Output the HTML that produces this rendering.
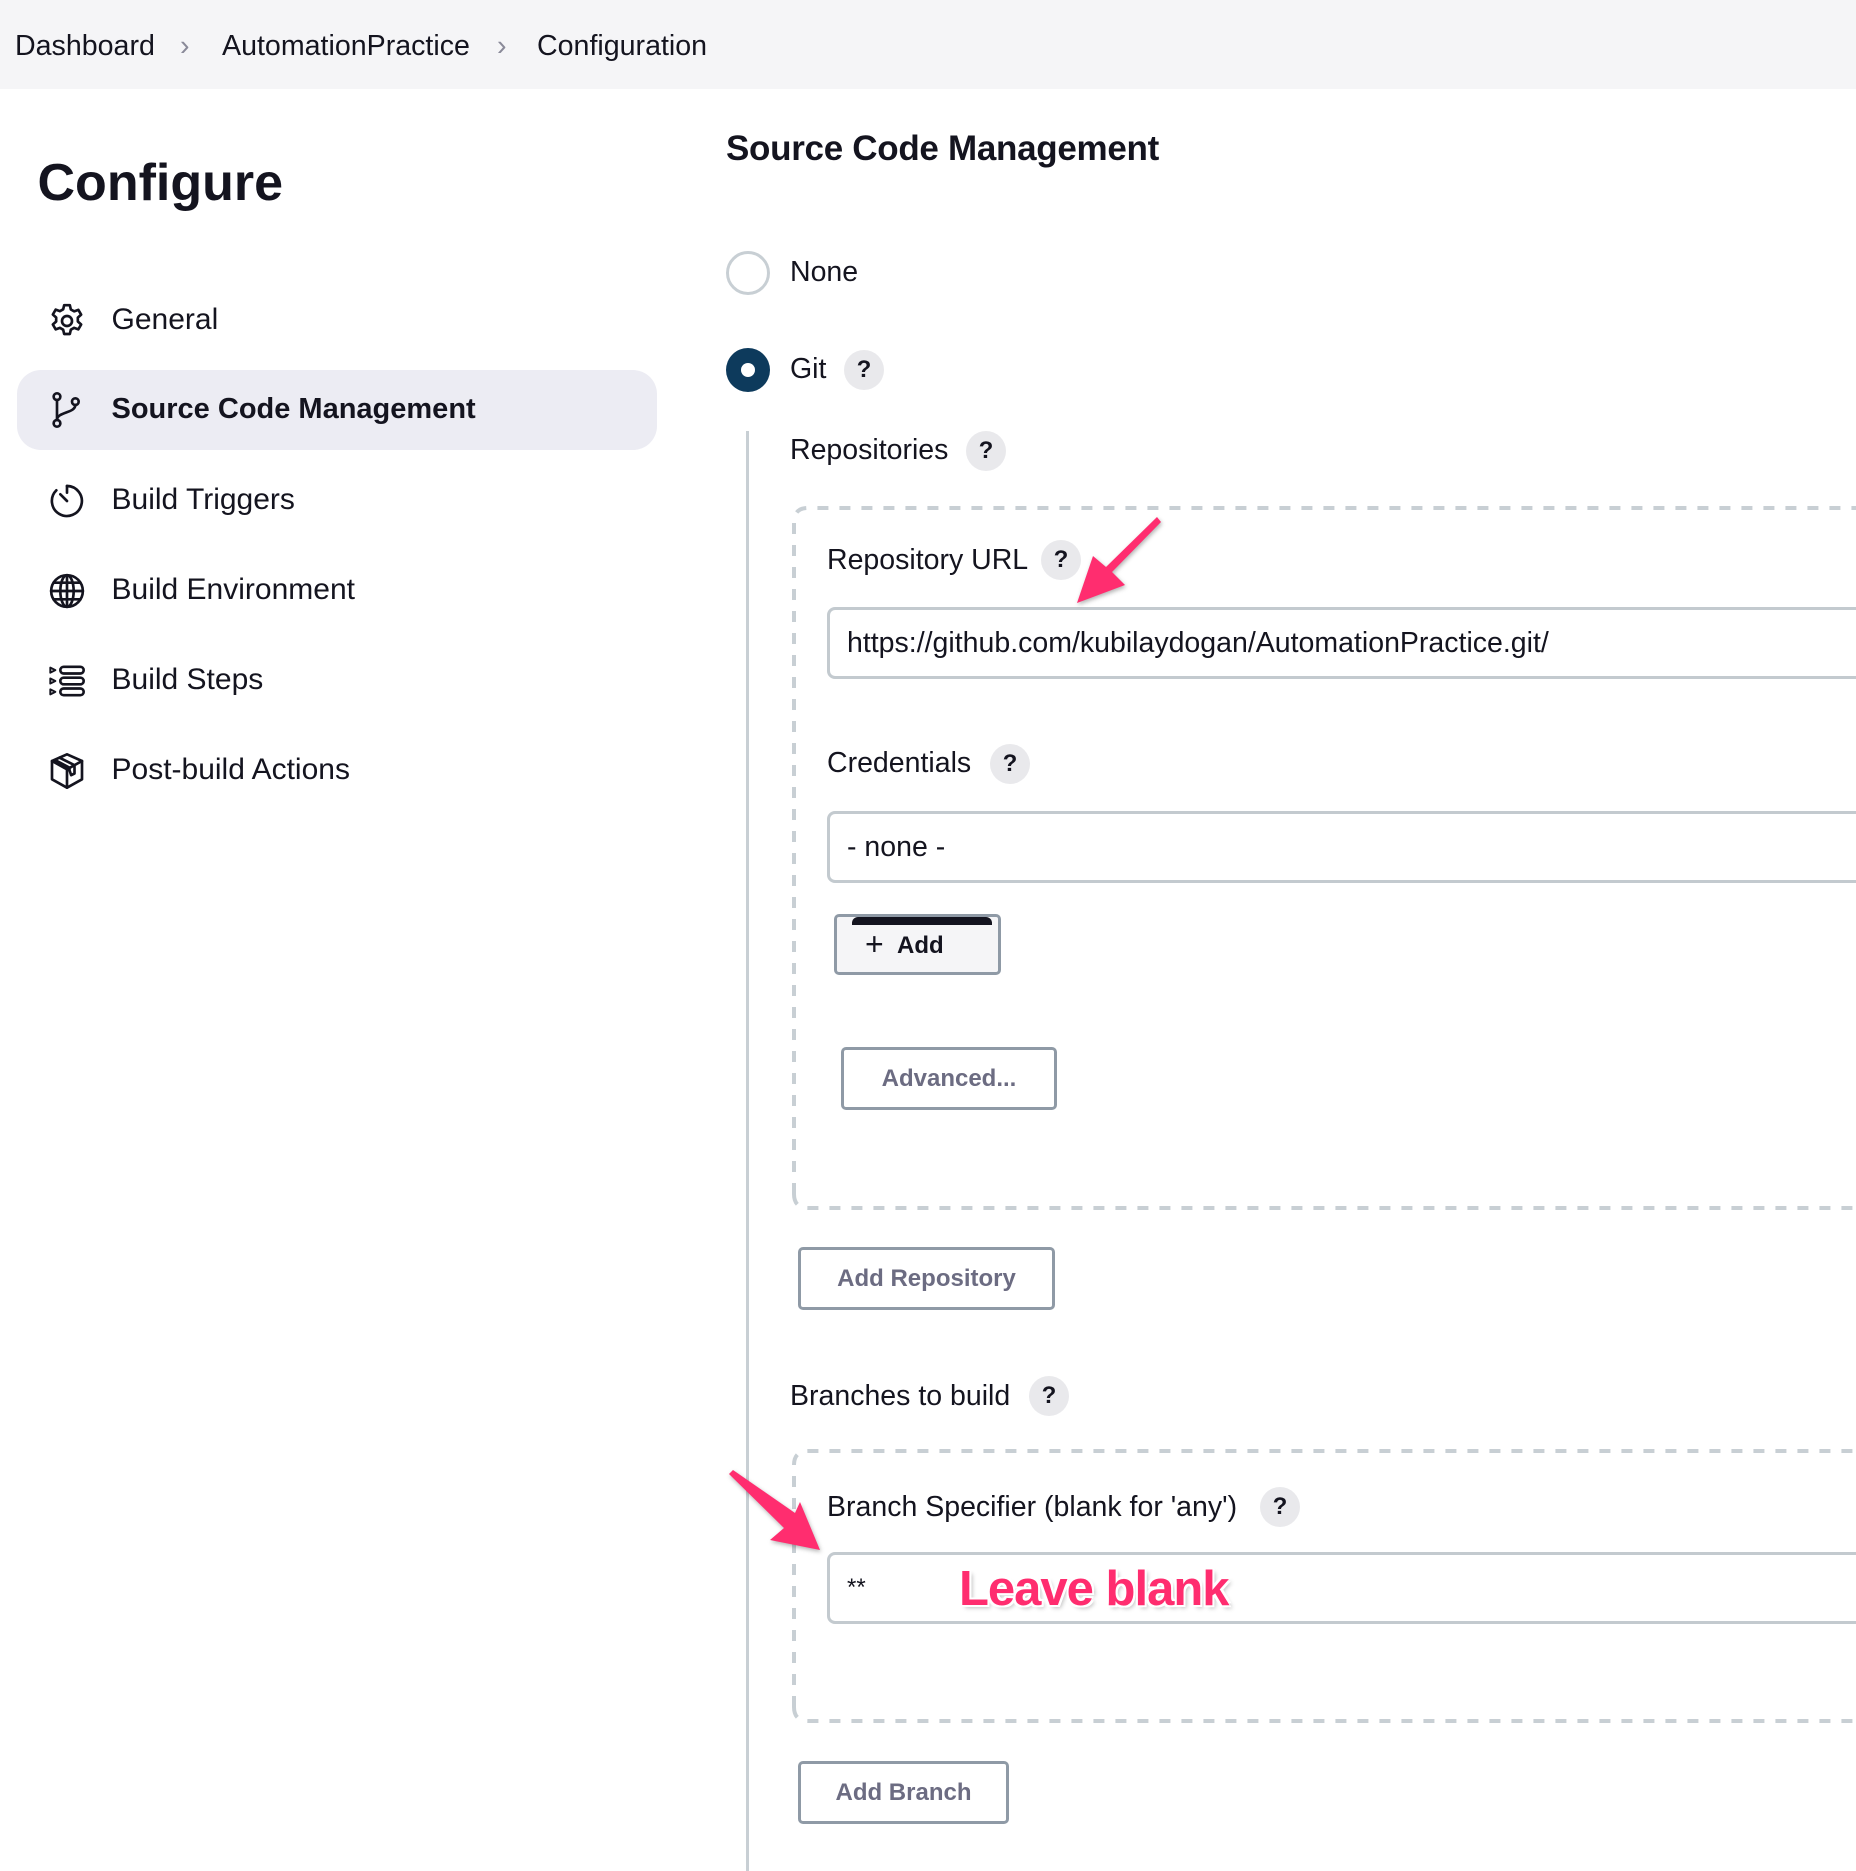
<!DOCTYPE html>
<html><head><meta charset="utf-8"><style>
*{box-sizing:border-box;margin:0;padding:0}
body{width:1856px;height:1860px;overflow:hidden;background:#fff;font-family:"Liberation Sans",sans-serif;color:#14141f;position:relative}
.a{position:absolute;white-space:nowrap}
.hdr{position:absolute;left:0;top:0;width:1856px;height:89px;background:#f5f5f7}
.bc{font-size:28.6px;top:30px}
.nav{font-size:30px;left:111px}
.lbl{font-size:28.5px}
.q{position:absolute;width:40px;height:40px;border-radius:50%;background:#e9e9ec;font-weight:bold;font-size:24px;text-align:center;line-height:40px;color:#14141f}
.inp{position:absolute;left:823px;width:1100px;height:72px;border:3px solid #c3cacf;border-radius:8px;font-size:28.5px;padding-left:17px;line-height:66px}
.btn{position:absolute;border:3px solid #8f9aa6;border-radius:5px;color:#6c6c82;font-weight:bold;font-size:24px;text-align:center}
svg.ic{position:absolute;left:37px;width:40px;height:40px;fill:none;stroke:#14141f;stroke-width:1.6;stroke-linecap:round;stroke-linejoin:round}
#w{position:absolute;left:10px;top:11px;width:1856px;height:1860px}
</style></head><body>
<div class="hdr"></div>
<div class="a bc" style="left:15px">Dashboard</div>
<div class="a bc" style="left:180px;color:#8a8a99">&#8250;</div>
<div class="a bc" style="left:222px">AutomationPractice</div>
<div class="a bc" style="left:497px;color:#8a8a99">&#8250;</div>
<div class="a bc" style="left:537px">Configuration</div>
<div id="w">
<div class="a" style="left:27.5px;top:142px;font-size:52px;font-weight:bold">Configure</div>

<div class="a" style="left:6.5px;top:359px;width:640px;height:80px;background:#ececf3;border-radius:24px"></div>
<svg class="ic" style="top:290px" viewBox="0 0 24 24"><circle cx="12" cy="12" r="3"/><path d="M10.3 2.5h3.4l.6 2.6 2 1.1 2.5-.9 1.7 2.9-2 1.8v2.3l2 1.8-1.7 2.9-2.5-.9-2 1.1-.6 2.6h-3.4l-.6-2.6-2-1.1-2.5.9-1.7-2.9 2-1.8V9.9l-2-1.8 1.7-2.9 2.5.9 2-1.1z"/></svg>
<div class="a nav" style="left:101.5px;top:292px">General</div>
<svg class="ic" style="top:379px" viewBox="0 0 24 24"><circle cx="6" cy="4" r="2"/><circle cx="6" cy="20" r="2"/><circle cx="17" cy="7" r="2"/><path d="M6 6v12M17 9c0 5-11 4-11 9"/></svg>
<div class="a nav" style="left:101.5px;top:382px;font-size:29px;font-weight:bold">Source Code Management</div>
<svg class="ic" style="top:470px" viewBox="0 0 24 24"><path d="M12 3a9 9 0 1 1-6.4 2.6"/><path d="M12 3v4M8 8l4 4"/></svg>
<div class="a nav" style="left:101.5px;top:472px">Build Triggers</div>
<svg class="ic" style="top:560px" viewBox="0 0 24 24"><circle cx="12" cy="12" r="9.5"/><ellipse cx="12" cy="12" rx="4" ry="9.5"/><path d="M2.5 12h19M4 7h16M4 17h16M12 2.5v19"/></svg>
<div class="a nav" style="left:101.5px;top:562px">Build Environment</div>
<svg class="ic" style="top:650px" viewBox="0 0 24 24"><path d="M2 4l3 1.5-3 1.5zM2 10.5l3 1.5-3 1.5zM2 17l3 1.5-3 1.5z" stroke-width="1.2"/><rect x="8" y="3.5" width="14" height="4" rx="2"/><rect x="8" y="10" width="14" height="4" rx="2"/><rect x="8" y="16.5" width="14" height="4" rx="2"/></svg>
<div class="a nav" style="left:101.5px;top:652px">Build Steps</div>
<svg class="ic" style="top:740px" viewBox="0 0 24 24"><path d="M12 2l9 4v11l-9 5-9-5V6z"/><path d="M3 6l9 5 9-5M12 11v11M7.5 4l9 4.5v5l-2 1-1-3V10L5 5.5"/></svg>
<div class="a nav" style="left:101.5px;top:742px">Post-build Actions</div>

<div class="a" style="left:716px;top:118px;font-size:35px;font-weight:bold;letter-spacing:-0.3px">Source Code Management</div>

<div class="a" style="left:716px;top:240px;width:44px;height:44px;border-radius:50%;border:3px solid #c8cfd4"></div>
<div class="a lbl" style="left:780px;top:245px">None</div>
<div class="a" style="left:716px;top:337px;width:44px;height:44px;border-radius:50%;background:#0d3a5c"></div>
<div class="a" style="left:731px;top:352px;width:14px;height:14px;border-radius:50%;background:#fff"></div>
<div class="a lbl" style="left:780px;top:342px">Git</div>
<div class="q" style="left:834px;top:339px">?</div>

<div class="a" style="left:736px;top:420px;width:3px;height:1440px;background:#c8cfd4"></div>

<div class="a lbl" style="left:780px;top:423px">Repositories</div>
<div class="q" style="left:956px;top:420px">?</div>

<svg class="a" style="left:780px;top:493px" width="1100" height="1230">
<g fill="none" stroke="#c8cfd4" stroke-width="4" stroke-dasharray="11 11">
<path d="M4 690 V18 Q4 4 18 4 H1100"/>
<path d="M4 690 Q4 704 18 704 H1100"/>
<path d="M4 1203 V961 Q4 947 18 947 H1100"/>
<path d="M4 1203 Q4 1217 18 1217 H1100"/>
</g>
</svg>

<div class="a lbl" style="left:817px;top:533px">Repository URL</div>
<div class="q" style="left:1031px;top:529px">?</div>
<div class="inp" style="top:596px;left:817px">https://github.com/kubilaydogan/AutomationPractice.git/</div>
<div class="a lbl" style="left:817px;top:736px">Credentials</div>
<div class="q" style="left:980px;top:733px">?</div>
<div class="inp" style="top:800px;left:817px">- none -</div>
<div class="btn" style="left:824px;top:903px;width:167px;height:61px;background:#f5f5f7;color:#14141f;line-height:55px;text-align:left;padding-left:28px"><span style="font-weight:normal;font-size:32px;vertical-align:-2px">+</span>&nbsp;&nbsp;Add</div>
<div class="a" style="left:842px;top:906px;width:140px;height:8px;background:#14141f;border-radius:6px 6px 0 0"></div>
<div class="btn" style="left:831px;top:1036px;width:216px;height:63px;line-height:57px">Advanced...</div>

<div class="btn" style="left:788px;top:1236px;width:257px;height:63px;line-height:57px">Add Repository</div>

<div class="a lbl" style="left:780px;top:1369px">Branches to build</div>
<div class="q" style="left:1019px;top:1365px">?</div>

<div class="a lbl" style="left:817px;top:1480px">Branch Specifier (blank for 'any')</div>
<div class="q" style="left:1250px;top:1476px">?</div>
<div class="inp" style="top:1541px;left:817px;font-size:24px">**</div>
<div class="a" style="left:949px;top:1550px;font-size:49px;font-weight:bold;color:#ff2d6f;letter-spacing:-1px;text-shadow:2px 2px 0 #fff,-2px -2px 0 #fff,2px -2px 0 #fff,-2px 2px 0 #fff,3px 3px 4px rgba(0,0,0,.25)">Leave blank</div>

<div class="btn" style="left:788px;top:1750px;width:211px;height:63px;line-height:57px">Add Branch</div>
</div>
<svg class="a" style="left:0;top:0" width="1856" height="1860" viewBox="0 0 1856 1860">
<g fill="#ff2d6f" style="filter:drop-shadow(1px 2px 2px rgba(0,0,0,.3))">
<path d="M1157 517 L1161 522 L1112 572 L1125 585 L1077 603 L1093 556 L1106 567 Z"/>
<path d="M729 1474 L733 1470 L795 1513 L800 1502 L820 1550 L770 1540 L784 1528 Z"/>
</g>
</svg>
</body></html>
